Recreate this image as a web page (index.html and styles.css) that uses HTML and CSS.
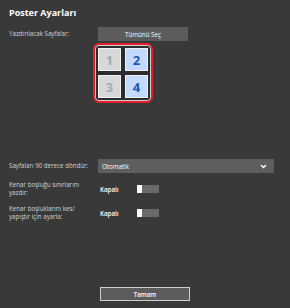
FILE: index.html
```html
<!DOCTYPE html>
<html lang="tr">
<head>
  <meta charset="UTF-8" />
  <title>Poster Ayarları</title>
  <link rel="stylesheet" href="styles.css">
</head>
<body>
  <div class="panel">
    <h1 class="title">Poster Ayarları</h1>

    <!-- Pages to print -->
    <div class="row row-pages">
      <span class="label">Yazdırılacak Sayfalar:</span>
      <button class="btn">Tümünü Seç</button>
    </div>

    <div class="row">
      <span></span>
      <div class="page-frame">
        <div class="tile">1</div>
        <div class="tile selected">2</div>
        <div class="tile">3</div>
        <div class="tile selected">4</div>
      </div>
    </div>

    <!-- Options -->
    <div class="row row-rotate">
      <span class="label">Sayfaları 90 derece döndür:</span>
      <div class="select">
        <span>Otomatik</span>
        <svg class="chevron" width="7" height="5" viewBox="0 0 7 5">
          <polyline points="1,1 3.5,3.5 6,1" fill="none" stroke="#fff" stroke-width="1.4"/>
        </svg>
      </div>
    </div>

    <div class="row row-toggle">
      <span class="label">Kenar boşluğu sınırlarını<br>yazdır:</span>
      <div class="switch-wrap">
        <span class="state">Kapalı</span>
        <span class="switch"><span class="thumb"></span></span>
      </div>
    </div>

    <div class="row row-toggle">
      <span class="label">Kenar boşluklarını kes/<br>yapıştır için ayarla:</span>
      <div class="switch-wrap">
        <span class="state">Kapalı</span>
        <span class="switch"><span class="thumb"></span></span>
      </div>
    </div>

    <button class="btn btn-ok">Tamam</button>
  </div>
</body>
</html>
```

FILE: styles.css
```css
:root {
  --background: #393939;
  --control: #5c5c5c;
  --text-main: #d4d4d4;
  --tile-off: #d8d8d8;
  --tile-on: #c4dafc;
  --accent: #1f56b4;
  --frame: #e2202c;
}

body {
  margin: 0;
  width: 290px;
  height: 308px;
  background-color: var(--background);
  font-family: "Open Sans", "Noto Sans", sans-serif;
  color: var(--text-main);
  overflow: hidden;
}

.panel {
  padding: 7px 0 0 9px;
  display: flex;
  flex-direction: column;
}

.title {
  margin: 0;
  font-size: 9px;
  line-height: 12px;
  font-weight: 700;
  color: #ffffff;
}

.row {
  display: grid;
  grid-template-columns: 89px auto;
  align-items: center;
}

.label {
  font-size: 6.2px;
  line-height: 8px;
}

.row-pages {
  margin-top: 8px;
}

.btn {
  width: 90px;
  height: 14px;
  padding: 0;
  border: none;
  background-color: var(--control);
  color: #ffffff;
  font-family: inherit;
  font-size: 6.2px;
  font-weight: 400;
}

.page-frame {
  margin: 2px 0 0 -5px;
  width: 60px;
  height: 60px;
  box-sizing: border-box;
  padding: 3px;
  border: 2px solid var(--frame);
  border-radius: 6px;
  box-shadow: inset 0 0 0 1px #cfcfcf;
  background-color: #2c2c2c;
  display: grid;
  grid-template-columns: 23px 23px;
  grid-template-rows: 23px 23px;
  gap: 4px;
}

.tile {
  box-sizing: border-box;
  border: 1px solid #f2f2f2;
  background-color: var(--tile-off);
  color: #a9a9a9;
  font-family: "Noto Sans", sans-serif;
  font-size: 13px;
  font-weight: 700;
  display: flex;
  align-items: center;
  justify-content: center;
}

.tile.selected {
  background-color: var(--tile-on);
  color: var(--accent);
}

.row-rotate {
  margin-top: 56px;
}

.select {
  width: 176px;
  height: 14px;
  box-sizing: border-box;
  padding: 0 7px 0 4px;
  background-color: #5e5e5e;
  color: #ffffff;
  font-size: 6.2px;
  display: flex;
  align-items: center;
  justify-content: space-between;
}

.row-toggle {
  margin-top: 8px;
}

.switch-wrap {
  display: flex;
  align-items: center;
  gap: 16px;
  padding-left: 2px;
}

.state {
  font-size: 6.2px;
  font-weight: 600;
  color: #ffffff;
  width: 21px;
}

.switch {
  width: 22px;
  height: 8px;
  background-color: #6a6a6a;
  display: flex;
}

.thumb {
  width: 5px;
  height: 8px;
  background-color: #ffffff;
}

.btn-ok {
  margin: 66px 0 0 91px;
  box-sizing: border-box;
  border: 1px solid #cfcfcf;
  font-weight: 600;
}
```
